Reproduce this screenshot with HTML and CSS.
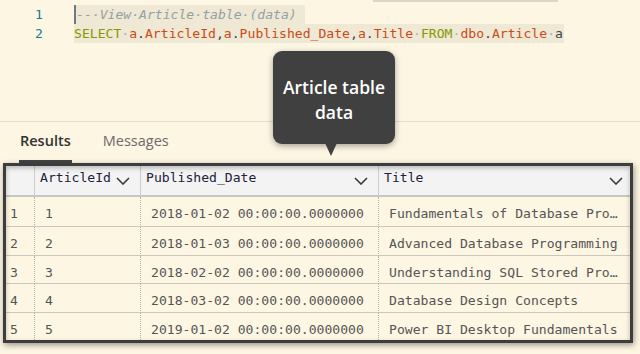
FILE: index.html
```html
<!DOCTYPE html>
<html lang="en">
<head>
<meta charset="utf-8">
<title>Query results</title>
<link rel="stylesheet" href="styles.css">
</head>
<body>
<div class="editor">
  <div class="strip"></div>
  <div class="line">
    <span class="ln">1</span>
    <span class="hl hl1"><span class="cm">--·View·Article·table·(data)</span></span>
  </div>
  <div class="line">
    <span class="ln">2</span>
    <span class="hl hl2"><span class="kw">SELECT</span><span class="ws">·</span><span class="id">a</span><span class="p">.</span><span class="id">ArticleId</span><span class="p">,</span><span class="id">a</span><span class="p">.</span><span class="id">Published_Date</span><span class="p">,</span><span class="id">a</span><span class="p">.</span><span class="id">Title</span><span class="ws">·</span><span class="kw">FROM</span><span class="ws">·</span><span class="id">dbo</span><span class="p">.</span><span class="id">Article</span><span class="ws">·</span><span class="p">a</span></span>
  </div>
  <div class="tooltip">
    <span class="tip-text">Article table data</span>
    <span class="tip-arrow"></span>
  </div>
</div>
<div class="tabs">
  <span class="tab active">Results</span>
  <span class="tab">Messages</span>
</div>
<div class="results">
  <div class="grid">
    <div class="hc rn"></div>
    <div class="hc"><span>ArticleId</span><svg class="chev" width="14" height="8" viewBox="0 0 14 8"><path d="M1 1 L7 7 L13 1"/></svg></div>
    <div class="hc"><span>Published_Date</span><svg class="chev" width="14" height="8" viewBox="0 0 14 8"><path d="M1 1 L7 7 L13 1"/></svg></div>
    <div class="hc last"><span>Title</span><svg class="chev" width="14" height="8" viewBox="0 0 14 8"><path d="M1 1 L7 7 L13 1"/></svg></div>

    <div class="dc rn">1</div><div class="dc">1</div><div class="dc">2018-01-02 00:00:00.0000000</div><div class="dc last">Fundamentals of Database Programming</div>
    <div class="dc rn">2</div><div class="dc">2</div><div class="dc">2018-01-03 00:00:00.0000000</div><div class="dc last">Advanced Database Programming</div>
    <div class="dc rn">3</div><div class="dc">3</div><div class="dc">2018-02-02 00:00:00.0000000</div><div class="dc last">Understanding SQL Stored Procedures</div>
    <div class="dc rn">4</div><div class="dc">4</div><div class="dc">2018-03-02 00:00:00.0000000</div><div class="dc last">Database Design Concepts</div>
    <div class="dc rn end">5</div><div class="dc end">5</div><div class="dc end">2019-01-02 00:00:00.0000000</div><div class="dc last end">Power BI Desktop Fundamentals</div>
  </div>
</div>
</body>
</html>
```
FILE: styles.css
```css
* { box-sizing: border-box; }
html, body { margin: 0; padding: 0; }
body {
  width: 640px;
  height: 354px;
  overflow: hidden;
  background: #fdf6e3;
  font-family: "Open Sans", "Noto Sans", sans-serif;
}

.editor {
  position: relative;
  height: 122px;
  border-bottom: 1px solid #e3ddcc;
  font-family: "DejaVu Sans Mono", "Liberation Mono", monospace;
  font-size: 13.1px;
}
.strip {
  height: 2px;
  width: 185px;
  margin-left: 373px;
  margin-bottom: 3px;
  background: #ddd6c2;
}
.line {
  display: flex;
  height: 19px;
  line-height: 19px;
  white-space: pre;
}
.ln {
  width: 74px;
  padding-right: 31px;
  text-align: right;
  color: #237893;
}
.hl { background: #eee8d5; }
.hl1 {
  border-left: 2px solid #687b84;
  padding-right: 8px;
}
.hl2 { padding-right: 1px; }
.cm { color: #93a1a1; font-style: italic; }
.kw { color: #859900; }
.id { color: #cb4b16; }
.p  { color: #3b4448; }
.ws { color: #a9b3b0; }

.tooltip {
  position: absolute;
  left: 273px;
  top: 51px;
  width: 122px;
  height: 93px;
  background: #404040;
  border-radius: 9px;
  box-shadow: 0 2px 6px rgba(0,0,0,0.35);
  display: flex;
  align-items: center;
  justify-content: center;
  padding: 0 8px;
}
.tip-text {
  color: #ffffff;
  font-family: "Open Sans", sans-serif;
  font-weight: 600;
  font-size: 17.5px;
  line-height: 25px;
  text-align: center;
  margin-top: 4px;
}
.tip-arrow {
  position: absolute;
  left: 52px;
  top: 92px;
  width: 0;
  height: 0;
  border-left: 6px solid transparent;
  border-right: 6px solid transparent;
  border-top: 13px solid #404040;
}

.tabs {
  display: flex;
  gap: 30px;
  padding: 9px 0 0 19px;
  height: 41px;
}
.tab {
  font-size: 14.5px;
  line-height: 20px;
  color: #6b6b6b;
  padding: 0 1px 1px 1px;
}
.tab.active {
  color: #333333;
  font-weight: 600;
  border-bottom: 3px solid #444444;
}

.results {
  position: relative;
  margin-left: 3px;
  width: 630px;
  height: 180px;
  border: 3px solid #3d3d3d;
  box-shadow: 1px 2px 6px rgba(0,0,0,0.4);
  font-family: "DejaVu Sans Mono", "Liberation Mono", monospace;
  font-size: 13.1px;
}
.results::after {
  content: "";
  position: absolute;
  inset: 0;
  pointer-events: none;
  box-shadow: inset 0 2px 5px rgba(0,0,0,0.25);
}
.grid {
  display: grid;
  grid-template-columns: 29px 106px 238px 1fr;
  grid-template-rows: 31px 30px 29px 28px 29px 27px;
}
.hc {
  display: flex;
  justify-content: space-between;
  align-items: flex-start;
  background: #f3f3f3;
  border-bottom: 2px solid #c6c6c6;
  border-right: 1px solid #cdcdcd;
  padding: 2px 10px 0 5px;
  line-height: 20px;
  color: #22223a;
  white-space: nowrap;
}
.hc.last { border-right: none; padding-right: 7px; }
.chev {
  margin-top: 9px;
  flex: none;
}
.chev path {
  fill: none;
  stroke: #3a3a3a;
  stroke-width: 1.6;
}
.dc {
  border-bottom: 1px solid #cac7bf;
  border-right: 1px dotted #b5b2aa;
  padding: 6px 8px 0 10px;
  line-height: 22px;
  color: #555555;
  white-space: nowrap;
  overflow: hidden;
  text-overflow: ellipsis;
}
.dc.rn { padding-left: 4px; }
.dc.last { border-right: none; }
.dc.end { border-bottom: none; }
```
